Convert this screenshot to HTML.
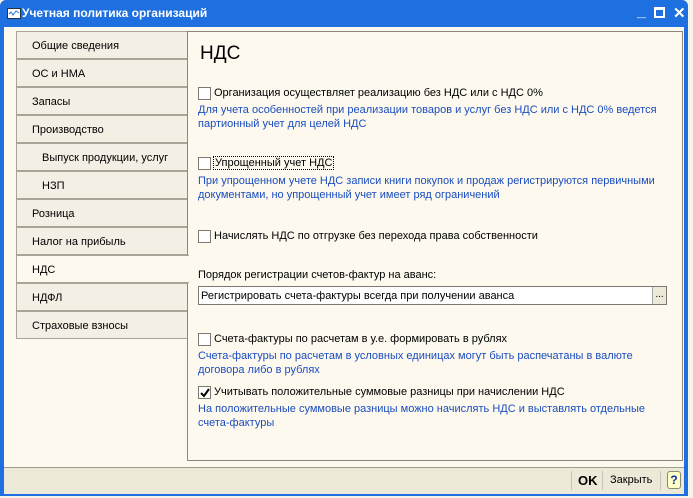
<!DOCTYPE html>
<html><head><meta charset="utf-8"><style>
*{margin:0;padding:0;box-sizing:border-box}
body{width:693px;height:498px;overflow:hidden;background:#f7f3e8;font-family:"Liberation Sans",sans-serif;font-size:11px;position:relative}
.win{position:absolute;left:0;top:0;width:688px;height:496px;background:#1e6fe0;border-radius:6px 6px 0 0}
.title{position:absolute;left:22px;top:6px;color:#fff;font-weight:bold;font-size:12px}
.body{position:absolute;left:4px;top:27px;width:680px;height:440px;background:#fdf9ee}
.foot{position:absolute;left:4px;top:467px;width:680px;height:27px;background:#ece9d8;border-top:1px solid #a09d90}
.tab{position:absolute;left:16px;width:171px;height:28px;background:#f3efe4;border:1px solid #a8a598;border-right:none;padding:8px 0 0 15px}
.panel{position:absolute;left:187px;top:31px;width:496px;height:430px;border:1px solid #8a877a;background:#fdf9ee}
.t{position:absolute;white-space:nowrap}
.b{color:#1a4dbf}
.cb{position:absolute;width:13px;height:13px;border:1px solid #7c7a70;background:#fff}
</style></head><body>
<div class="win"></div>
<svg style="position:absolute;left:7px;top:8px" width="14" height="11"><rect x="0.5" y="0.5" width="13" height="10" fill="#fff" stroke="#234"/><path d="M2 6 L4 4 L6 7 L9 3 L12 5" stroke="#1e6fe0" fill="none"/></svg>
<div class="title">Учетная политика организаций</div>
<div class="t" style="left:637px;top:3px;color:#fff;font-size:16px;font-weight:bold">_</div>
<div style="position:absolute;left:654px;top:7px;width:11px;height:11px;border:2px solid #fff;border-top-width:3px"></div>
<div class="t" style="left:673px;top:4px;color:#fff;font-size:15px;font-weight:bold">✕</div>
<div class="body"></div>
<div class="foot"></div>
<div class="tab" style="top:31px">Общие сведения</div>
<div class="tab" style="top:59px">ОС и НМА</div>
<div class="tab" style="top:87px">Запасы</div>
<div class="tab" style="top:115px">Производство</div>
<div class="tab" style="top:143px;padding-left:25px">Выпуск продукции, услуг</div>
<div class="tab" style="top:171px;padding-left:25px">НЗП</div>
<div class="tab" style="top:199px">Розница</div>
<div class="tab" style="top:227px">Налог на прибыль</div>
<div class="tab" style="top:283px">НДФЛ</div>
<div class="tab" style="top:311px">Страховые взносы</div>
<div class="panel"></div>
<div class="tab" style="top:255px;background:#fdf9ee;width:173px;z-index:2;border-right:none">НДС</div>
<div class="t" style="left:200px;top:43px;font-size:19px">НДС</div>
<div class="cb" style="left:198px;top:87px"></div>
<div class="t" style="left:214px;top:87px">Организация осуществляет реализацию без НДС или с НДС 0%</div>
<div class="t b" style="left:198px;top:104px">Для учета особенностей при реализации товаров и услуг без НДС или с НДС 0% ведется</div>
<div class="t b" style="left:198px;top:118px">партионный учет для целей НДС</div>
<div class="cb" style="left:198px;top:157px"></div>
<div class="t" style="left:213px;top:156px;border:1px dotted #000;padding:0 1px">Упрощенный учет НДС</div>
<div class="t b" style="left:198px;top:175px">При упрощенном учете НДС записи книги покупок и продаж регистрируются первичными</div>
<div class="t b" style="left:198px;top:189px">документами, но упрощенный учет имеет ряд ограничений</div>
<div class="cb" style="left:198px;top:230px"></div>
<div class="t" style="left:214px;top:230px">Начислять НДС по отгрузке без перехода права собственности</div>
<div class="t" style="left:198px;top:269px">Порядок регистрации счетов-фактур на аванс:</div>
<div style="position:absolute;left:198px;top:286px;width:469px;height:19px;border:1px solid #7c7a70;background:#fff"></div>
<div style="position:absolute;left:652px;top:287px;width:14px;height:17px;background:#ece9d8;border-left:1px solid #aaa;font-size:10px;text-align:center;line-height:15px">...</div>
<div class="t" style="left:201px;top:290px">Регистрировать счета-фактуры всегда при получении аванса</div>
<div class="cb" style="left:198px;top:333px"></div>
<div class="t" style="left:214px;top:333px">Счета-фактуры по расчетам в у.е. формировать в рублях</div>
<div class="t b" style="left:198px;top:350px">Счета-фактуры по расчетам в условных единицах могут быть распечатаны в валюте</div>
<div class="t b" style="left:198px;top:364px">договора либо в рублях</div>
<div class="cb" style="left:198px;top:386px"></div>
<svg style="position:absolute;left:200px;top:388px" width="10" height="10"><path d="M1 5 L4 8 L9 1" stroke="#000" stroke-width="2" fill="none"/></svg>
<div class="t" style="left:214px;top:386px">Учитывать положительные суммовые разницы при начислении НДС</div>
<div class="t b" style="left:198px;top:403px">На положительные суммовые разницы можно начислять НДС и выставлять отдельные</div>
<div class="t b" style="left:198px;top:417px">счета-фактуры</div>
<div style="position:absolute;left:571px;top:471px;width:1px;height:19px;background:#c8c5b8"></div>
<div class="t" style="left:578px;top:473px;font-weight:bold;font-size:13px">OK</div>
<div style="position:absolute;left:602px;top:471px;width:1px;height:19px;background:#c8c5b8"></div>
<div class="t" style="left:610px;top:474px">Закрыть</div>
<div style="position:absolute;left:660px;top:471px;width:1px;height:19px;background:#c8c5b8"></div>
<div style="position:absolute;left:667px;top:471px;width:14px;height:18px;background:#ffffc8;border:1px solid #8a8a70;border-radius:3px;color:#1030a0;font-weight:bold;font-size:12px;text-align:center;line-height:16px">?</div>
</body></html>
